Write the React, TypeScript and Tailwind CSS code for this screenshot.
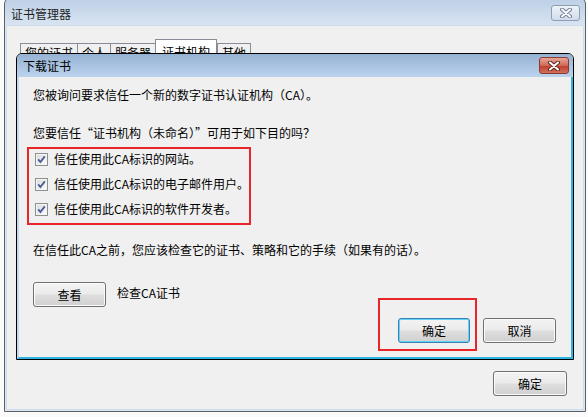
import React from "react";

const btn =
  "flex items-center justify-center h-[25px] rounded-[3px] border text-[12px] text-black bg-[linear-gradient(to_bottom,#f3f3f3_0%,#ebebeb_48%,#dedede_52%,#d0d0d0_100%)]";

const CloseX: React.FC<{ outline: string }> = ({ outline }) => (
  <svg width="14" height="10" viewBox="0 0 14 10">
    <path d="M3 1.5 L11 8.5 M11 1.5 L3 8.5" stroke={outline} strokeWidth="4" strokeLinecap="round" />
    <path d="M3 1.5 L11 8.5 M11 1.5 L3 8.5" stroke="#ffffff" strokeWidth="2" strokeLinecap="round" />
  </svg>
);

const Check: React.FC = () => (
  <span className="flex items-center justify-center w-[13px] h-[13px] border border-[#8e8f8f] bg-white">
    <span className="flex items-center justify-center w-[11px] h-[11px] border border-[#f4f4f4] bg-[linear-gradient(135deg,#dcdcdc,#fbfbfb)]">
      <svg width="9" height="9" viewBox="0 0 9 9">
        <path d="M1.2 4.4 L3.4 7 L7.8 1.4" stroke="#4a5f97" strokeWidth="1.9" fill="none" />
      </svg>
    </span>
  </span>
);

const purposes = [
  "信任使用此CA标识的网站。",
  "信任使用此CA标识的电子邮件用户。",
  "信任使用此CA标识的软件开发者。",
];

const tabs = ["您的证书", "个人", "服务器", "证书机构", "其他"];

export default function App() {
  return (
    <div
      lang="zh-CN"
      className="relative w-[588px] h-[417px] overflow-hidden bg-[#fbfbfb] text-[12px] leading-[16px] text-black font-[family-name:'Noto_Sans_CJK_SC','Liberation_Sans',sans-serif]"
    >
      {/* outer window */}
      <div className="ml-[4px] -mt-[3px] w-[582px] h-[415px] flex flex-col border border-[#5b5f66] rounded-tr-[7px] rounded-tl-[7px] bg-[linear-gradient(to_bottom,#bccfe6,#dbe6f3_30px,#dce7f3)]">
        <div className="flex items-start justify-between h-[27px] pl-[6px] pr-[5px]">
          <span className="pt-[8px] text-[#1e1e1e]">证书管理器</span>
          <span className="mt-[7px] flex items-center justify-center w-[29px] h-[16px] rounded-[3px] border border-[#8d9db3] bg-[linear-gradient(to_bottom,#eef3f9,#d2dcea)]">
            <CloseX outline="#6f7f95" />
          </span>
        </div>
        <div className="flex-1 flex flex-col mx-[1px] mb-[1px] border border-[#cfdcec] bg-[#f0f0f0]">
          <div className="flex items-end pl-[13px] mt-[13px]">
            {tabs.map((t) => {
              const on = t === "证书机构";
              return (
                <div
                  key={t}
                  className={
                    on
                      ? "h-[20px] px-[6px] pt-[4px] border border-b-0 border-[#898c95] bg-white"
                      : "h-[16px] px-[4px] pt-[1px] -mr-[1px] border border-b-0 border-[#898c95] bg-[#f0f0f0]"
                  }
                >
                  {t}
                </div>
              );
            })}
          </div>
          <div className="mt-auto flex justify-end pr-[16px] pb-[13px]">
            <button className={`${btn} w-[74px] border-[#707070] shadow-[inset_0_0_0_1px_#fbfbfb]`}>确定</button>
          </div>
        </div>
      </div>

      {/* download certificate dialog */}
      <div className="absolute left-[16px] top-[53px] w-[558px] h-[307px] flex flex-col border border-black rounded-t-[6px] bg-[#f0f0f0]">
        <div className="flex items-start justify-between h-[23px] pl-[6px] pr-[4px] rounded-t-[5px] bg-[linear-gradient(to_bottom,#96b2d3,#bbd3ed)]">
          <span className="pt-[4px]">下载证书</span>
          <span className="mt-[3px] flex items-center justify-center w-[30px] h-[17px] rounded-[3px] border border-[#8a3b31] bg-[linear-gradient(to_bottom,#e8a597,#d06a58_50%,#c2402e_55%,#d2705c)]">
            <CloseX outline="#5a2520" />
          </span>
        </div>
        <div className="flex-1 flex flex-col pl-[14px] pr-[15px] pt-[10px] border-l-2 border-l-[#c3d9ef] border-r-2 border-r-[#2fb4df] border-b-2 border-b-[#2fb4df]">
          <p>您被询问要求信任一个新的数字证书认证机构（CA）。</p>
          <p className="mt-[22px]">您要信任“证书机构（未命名）”可用于如下目的吗？</p>
          <div className="mt-[6px] -ml-[6px] w-[224px] h-[78px] flex flex-col gap-[5px] pl-[6px] border-2 border-[#e8262a]">
            {purposes.map((p) => (
              <label key={p} className="flex items-center gap-[6px] h-[20px]">
                <Check />
                <span>{p}</span>
              </label>
            ))}
          </div>
          <p className="mt-[17px]">在信任此CA之前，您应该检查它的证书、策略和它的手续（如果有的话）。</p>
          <div className="mt-[24px] flex items-center gap-[11px]">
            <button className={`${btn} w-[73px] border-[#707070] shadow-[inset_0_0_0_1px_#fbfbfb]`}>查看</button>
            <span className="-mt-[3px]">检查CA证书</span>
          </div>
          <div className="mt-[11px] flex justify-end gap-[13px]">
            <button className={`${btn} w-[72px] border-[#3c7fb1] shadow-[inset_0_0_0_1px_#62d3f8]`}>确定</button>
            <button className={`${btn} w-[73px] border-[#707070] shadow-[inset_0_0_0_1px_#fbfbfb]`}>取消</button>
          </div>
        </div>
        {/* annotation around the OK button */}
        <div className="absolute left-[361px] top-[244px] w-[99px] h-[53px] border-2 border-[#e8262a]" />
      </div>
    </div>
  );
}
